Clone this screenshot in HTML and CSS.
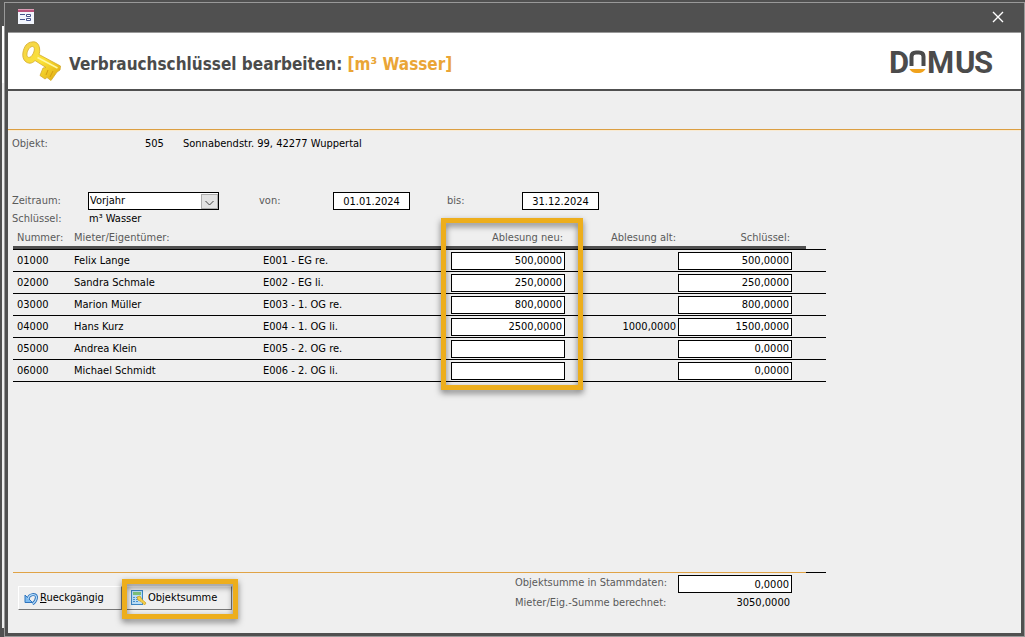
FILE: index.html
```html
<!DOCTYPE html>
<html lang="de">

	<head>
		<meta charset="UTF-8">
		<title>Verbrauchschlüssel bearbeiten</title>
		<link rel="stylesheet" href="styles.css">
	</head>

	<body>
		<div class="backdrop"></div>
		<div class="window">
			<div class="titlebar">
				<svg class="form-icon" width="16" height="15" viewBox="0 0 16 15">
					<rect width="16" height="15" fill="#f2f5fd" />
					<rect width="16" height="3" fill="#b8517b" />
					<rect width="16" height="1" fill="#dc9cb5" />
					<path d="M2 5.500h5M2 10.500h5" stroke="#46538c" />
					<path d="M8.500 5.500h4v2h-4zM8.500 9.500h4v2h-4z" fill="#fff" stroke="#46538c" />
				</svg>
				<button class="close" type="button" aria-label="Schließen">
					<svg width="12" height="12" viewBox="0 0 12 12">
						<path d="M1 1l10 10M11 1L1 11" stroke="#fff" stroke-width="1.400" />
					</svg>
				</button>
			</div>
			<div class="content">
				<header class="header">
					<svg class="key" width="40" height="41" viewBox="0 0 40 41">
						<defs>
							<linearGradient id="gold" x1="0" y1="0" x2="1" y2="1">
								<stop offset="0" stop-color="#f3d24c" />
								<stop offset="0.500" stop-color="#fbe235" />
								<stop offset="1" stop-color="#dfa70d" />
							</linearGradient>
						</defs>
						<path d="M10 1C14 0 17 3 17.500 7C18 10 17.500 12 17 13.500L38.500 25L38 29L35 31L29 39.500L25 36.500L23 38L18 34.500L21 27L24 26.500L13 19.500C10 23 6 23 3 20C-1 16 1 8 4 4C6 2 8 1 10 1ZM10 5.500C7 6 4.500 11 5 14.500C5.500 17 8 17 10 14.500C12 12 13 7.500 12 6.500C11.500 5.500 10.500 5.400 10 5.500Z" fill="url(#gold)" fill-rule="evenodd" stroke="#d3aa2c" stroke-width="0.800" />
						<path d="M15.500 16.500L35.500 27" stroke="#fff8a0" stroke-width="1.500" />
						<path d="M26 29L24 34M31 30L28 36" stroke="#d39c12" />
					</svg>
					<h1 class="title">Verbrauchschlüssel bearbeiten: <span class="unit">[m³ Wasser]</span></h1>
					<svg class="logo" width="106" height="40" viewBox="0 -6 106 40" role="img" aria-label="DOMUS">
						<text class="logo-text" x="0 38 66 85" y="26">DMUS</text>
						<path d="M22.500 19V9.500Q22.500 5.500 27 5.500H30Q34.500 5.500 34.500 9.500V19" fill="none" stroke="#4b4b4b" stroke-width="4" />
						<path d="M20.500 22H36.500Q34 26 30 26H27Q23 26 20.500 22Z" fill="#f0a21c" />
					</svg>
				</header>
				<div class="toolbar"></div>

				<div class="form">
					<div class="row object">
						<span class="label">Objekt:</span>
						<span class="object-no">505</span>
						<span>Sonnabendstr. 99, 42277 Wuppertal</span>
					</div>
					<div class="row period">
						<label class="label" for="zeitraum">Zeitraum:</label>
						<div class="combo">
							<select class="box" id="zeitraum">
								<option>Vorjahr</option>
							</select>
							<svg class="arrow" width="17" height="15" viewBox="0 0 17 15">
								<rect x="0.500" y="0.500" width="16" height="14" fill="#e3e3e3" stroke="#adadad" />
								<path d="M4.500 7l4 4l4 -4" fill="none" stroke="#444" />
							</svg>
						</div>
						<label class="label" for="von">von:</label>
						<input class="box date" id="von" type="text" value="01.01.2024">
						<label class="label" for="bis">bis:</label>
						<input class="box date" id="bis" type="text" value="31.12.2024">
					</div>
					<div class="row">
						<span class="label">Schlüssel:</span>
						<span>m³ Wasser</span>
					</div>
				</div>

				<div class="readings">
					<table class="table">
						<colgroup>
							<col class="c-no"><col class="c-name"><col class="c-unit">
							<col class="c-value"><col class="c-old"><col class="c-value">
							<col class="c-gap"><col class="c-tail">
						</colgroup>
						<thead>
							<tr>
								<th>Nummer:</th>
								<th>Mieter/Eigentümer:</th>
								<th></th>
								<th class="num">Ablesung neu:</th>
								<th class="num">Ablesung alt:</th>
								<th class="num">Schlüssel:</th>
								<th></th>
								<td class="tail"></td>
							</tr>
						</thead>
						<tbody>
							<tr>
								<td>01000</td>
								<td>Felix Lange</td>
								<td>E001 - EG re.</td>
								<td class="field"><input class="box num" type="text" aria-label="Ablesung neu 01000" value="500,0000"></td>
								<td class="num"></td>
								<td class="field"><input class="box num" type="text" aria-label="Schlüssel 01000" value="500,0000"></td>
								<td colspan="2"></td>
							</tr>
							<tr>
								<td>02000</td>
								<td>Sandra Schmale</td>
								<td>E002 - EG li.</td>
								<td class="field"><input class="box num" type="text" aria-label="Ablesung neu 02000" value="250,0000"></td>
								<td class="num"></td>
								<td class="field"><input class="box num" type="text" aria-label="Schlüssel 02000" value="250,0000"></td>
								<td colspan="2"></td>
							</tr>
							<tr>
								<td>03000</td>
								<td>Marion Müller</td>
								<td>E003 - 1. OG re.</td>
								<td class="field"><input class="box num" type="text" aria-label="Ablesung neu 03000" value="800,0000"></td>
								<td class="num"></td>
								<td class="field"><input class="box num" type="text" aria-label="Schlüssel 03000" value="800,0000"></td>
								<td colspan="2"></td>
							</tr>
							<tr>
								<td>04000</td>
								<td>Hans Kurz</td>
								<td>E004 - 1. OG li.</td>
								<td class="field"><input class="box num" type="text" aria-label="Ablesung neu 04000" value="2500,0000"></td>
								<td class="num">1000,0000</td>
								<td class="field"><input class="box num" type="text" aria-label="Schlüssel 04000" value="1500,0000"></td>
								<td colspan="2"></td>
							</tr>
							<tr>
								<td>05000</td>
								<td>Andrea Klein</td>
								<td>E005 - 2. OG re.</td>
								<td class="field"><input class="box num" type="text" aria-label="Ablesung neu 05000" value=""></td>
								<td class="num"></td>
								<td class="field"><input class="box num" type="text" aria-label="Schlüssel 05000" value="0,0000"></td>
								<td colspan="2"></td>
							</tr>
							<tr>
								<td>06000</td>
								<td>Michael Schmidt</td>
								<td>E006 - 2. OG li.</td>
								<td class="field"><input class="box num" type="text" aria-label="Ablesung neu 06000" value=""></td>
								<td class="num"></td>
								<td class="field"><input class="box num" type="text" aria-label="Schlüssel 06000" value="0,0000"></td>
								<td colspan="2"></td>
							</tr>
						</tbody>
					</table>
					<div class="marker marker-column"></div>
				</div>

				<footer class="footer">
					<div class="rule"></div>
					<div class="actions">
						<button class="btn" type="button">
							<svg width="15" height="14" viewBox="0 0 15 14">
								<path d="M4 8C5 3 12 2 12.500 6C12.500 9 10.500 11.500 8.500 13" fill="none" stroke="#2f74bd" stroke-width="3" />
								<path d="M1 4V11.500H8.500Z" fill="#7fbcf0" stroke="#2f74bd" />
								<path d="M4 8C5 3 12 2 12.500 6C12.500 9 10.500 11.500 8.500 13" fill="none" stroke="#b5dbf8" stroke-width="1.200" />
							</svg>
							<span><u>R</u>ueckgängig</span>
						</button>
						<div class="marked">
							<button class="btn" type="button">
								<svg width="16" height="16" viewBox="0 0 16 16">
									<rect x="0.500" y="0.500" width="11" height="14" fill="#b9dcf5" stroke="#3c86c4" />
									<rect x="2" y="2" width="8" height="3" fill="#7cc07a" />
									<path d="M2 7.500h8M2 9.500h8M2 11.500h5" stroke="#4a90cc" stroke-dasharray="2 1" />
									<path d="M6 7L9 6L11 9.500L15 13L13.500 15L10 11.500L7 10Z" fill="#f5d04a" stroke="#cfa32a" stroke-width="0.800" />
								</svg>
								<span>Objektsumme</span>
							</button>
							<div class="marker marker-button"></div>
						</div>
						<div class="sums">
							<label class="label" for="summe">Objektsumme in Stammdaten:</label>
							<input class="box num" id="summe" type="text" value="0,0000">
							<span class="label">Mieter/Eig.-Summe berechnet:</span>
							<span class="num total">3050,0000</span>
						</div>
					</div>
				</footer>
			</div>
		</div>
	</body>

</html>
```

FILE: styles.css
```css
* {
	box-sizing: border-box;
}

body {
	margin: 0;
	padding-top: 2px;
	min-height: 100vh;
	display: flex;
	background: #505050;
	color: #000;
	font: 11px/16px "DejaVu Sans Condensed", "Noto Sans", sans-serif;
}

input,
select,
button {
	font: inherit;
	color: inherit;
	margin: 0;
	border-radius: 0;
}

svg {
	display: block;
	flex: none;
}

/* edge of the window behind */
.backdrop {
	flex: none;
	width: 2px;
	margin: 24px 0 9px 2px;
	background: #eee;
	border-top: 57px solid #fff;
}

.window {
	flex: 1;
	display: flex;
	flex-direction: column;
	border: 1px solid #999;
	background: #505050;
	padding: 0 3px 3px;
}

.titlebar {
	height: 29px;
	display: flex;
	align-items: center;
	justify-content: space-between;
	padding: 0 17px 2px 10px;
}

.close {
	padding: 0;
	border: 0 none;
	background: none;
}

.content {
	flex: 1;
	display: flex;
	flex-direction: column;
	background: #efefef;
	border-top: 1px solid #999;
}

.header {
	height: 58px;
	display: flex;
	align-items: center;
	padding: 0 26px 0 14px;
	background: #fff;
	border-bottom: 2px solid #505050;
}

.title {
	flex: 1;
	margin: 0;
	padding: 6px 0 0 7px;
	font-size: 17px;
	line-height: 24px;
	color: #4b4b4b;
}

.unit {
	color: #eaa536;
}

.logo-text {
	font: bold 31px Roboto, sans-serif;
	fill: #4b4b4b;
}

.toolbar {
	flex: none;
	height: 39px;
	border-bottom: 1px solid #dc9f42;
	box-shadow: 0 1px #f8ead2;
}

.form {
	padding: 5px 4px 0;
}

.row {
	display: grid;
	grid-template-columns: 77px 245px 189px;
	align-items: center;
	min-height: 18px;
}

.label {
	color: #5a5a5a;
}

.object {
	grid-template-columns: 133px 38px auto;
	margin-bottom: 39px;
}

.period {
	grid-template-columns: 76px 171px 74px 114px 75px 77px;
}

.box {
	width: 100%;
	height: 18px;
	padding: 0 2px;
	border: 1px solid #000;
	background: #fff;
	line-height: 16px;
}

.combo {
	position: relative;
	width: 131px;
}

.combo .box {
	display: block;
	appearance: none;
	padding: 0 1px;
}

.arrow {
	position: absolute;
	top: 2px;
	right: 1px;
	pointer-events: none;
}

.date {
	width: 77px;
	text-align: center;
}

.readings {
	position: relative;
	width: 813px;
	margin-left: 5px;
}

.table {
	width: 100%;
	table-layout: fixed;
	border-collapse: separate;
	border-spacing: 0;
}

.c-no {
	width: 61px;
}

.c-name {
	width: 189px;
}

.c-unit {
	width: 188px;
}

.c-value {
	width: 114px;
}

.c-old {
	width: 113px;
}

.c-gap {
	width: 14px;
}

.c-tail {
	width: 20px;
}

th {
	height: 21px;
	padding: 2px 0 0;
	border-bottom: 3px solid #505050;
	color: #5a5a5a;
	font-weight: normal;
	text-align: left;
}

th:first-child {
	padding-left: 4px;
}

td {
	height: 22px;
	padding: 0;
	border-top: 1px solid #000;
}

td.tail {
	height: 21px;
	border: 0 none;
}

td:first-child {
	padding-left: 4px;
}

tbody tr:last-child td {
	height: 23px;
	border-bottom: 1px solid #000;
}

.field .box {
	display: block;
}

.num {
	text-align: right;
}

th.num,
td.num {
	padding-right: 2px;
}

/* orange frames that point out the relevant parts */
.marker {
	position: absolute;
	border: 5px solid #edae1c;
	filter: drop-shadow(0 3px 3px rgba(0, 0, 0, 0.5));
	pointer-events: none;
}

.marker-column {
	top: -10px;
	bottom: -8px;
	left: 428px;
	width: 142px;
}

.marker-button {
	top: -7px;
	right: -6px;
	bottom: -9px;
	left: 0;
}

.footer {
	margin-top: auto;
	padding-left: 5px;
	width: 818px;
}

.rule {
	height: 1px;
	background: #e0a346;
	border-right: 20px solid #000;
}

.actions {
	height: 60px;
	display: flex;
	align-items: flex-start;
	padding: 2px 0 0 5px;
}

.btn {
	width: 104px;
	height: 24px;
	margin-top: 11px;
	padding: 0 5px;
	display: flex;
	align-items: center;
	gap: 1px;
	border: 1px solid;
	border-color: #fff #777 #777 #fff;
	background: #efefef;
}

.marked {
	position: relative;
	margin-top: 11px;
}

.marked .btn {
	width: 110px;
	margin: 0;
	padding-left: 8px;
}

.sums {
	margin-left: auto;
	margin-right: 34px;
	display: grid;
	grid-template-columns: 163px 114px;
	row-gap: 2px;
}

.total {
	padding-right: 2px;
}
```
